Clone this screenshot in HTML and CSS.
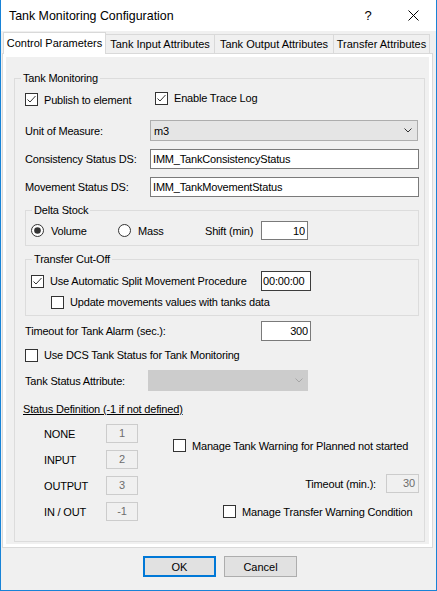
FILE: index.html
```html
<!DOCTYPE html>
<html lang="en">
<head>
    <meta charset="UTF-8">
    <title>Tank Monitoring Configuration</title>
    <link rel="stylesheet" href="styles.css">
</head>
<body>
    <div id="dialog">
        <div id="title_bar">
            <span id="title_text">Tank Monitoring Configuration</span>
            <span id="help_btn">?</span>
            <span id="close_btn">
                <svg width="11" height="11" viewBox="0 0 11 11"><path d="M0.5 0.5L10.5 10.5M10.5 0.5L0.5 10.5" stroke="#000" stroke-width="1"/></svg>
            </span>
        </div>

        <ul id="tabs">
            <li class="tab selected" style="width: 103px;">Control Parameters</li>
            <li class="tab" style="width: 109px;">Tank Input Attributes</li>
            <li class="tab" style="width: 119px;">Tank Output Attributes</li>
            <li class="tab" style="width: 96px;">Transfer Attributes</li>
        </ul>

        <div id="tab_pane">
            <div id="tab_page">
                <fieldset id="monitoring" class="group">
                    <legend>Tank Monitoring</legend>
                    <div class="group_body monitoring_body">

                        <div class="row row_checks">
                            <label class="check publish">
                                <svg class="box" width="13" height="13" viewBox="0 0 13 13"><rect x="0.5" y="0.5" width="12" height="12" fill="#fff" stroke="#333"/><path d="M2.5 6.5L5 9L10.5 3" fill="none" stroke="#333"/></svg>
                                Publish to element
                            </label>
                            <label class="check trace">
                                <svg class="box" width="13" height="13" viewBox="0 0 13 13"><rect x="0.5" y="0.5" width="12" height="12" fill="#fff" stroke="#333"/><path d="M2.5 6.5L5 9L10.5 3" fill="none" stroke="#333"/></svg>
                                Enable Trace Log
                            </label>
                        </div>

                        <div class="row row_combo">
                            <span class="field_label">Unit of Measure:</span>
                            <div class="combo">
                                <span class="combo_value">m3</span>
                                <svg width="8" height="5" viewBox="0 0 8 5"><path d="M0.5 0.5L4 4L7.5 0.5" fill="none" stroke="#333"/></svg>
                            </div>
                        </div>

                        <div class="row row_text">
                            <span class="field_label">Consistency Status DS:</span>
                            <input class="text_box wide" type="text" value="IMM_TankConsistencyStatus">
                        </div>

                        <div class="row row_text">
                            <span class="field_label">Movement Status DS:</span>
                            <input class="text_box wide" type="text" value="IMM_TankMovementStatus">
                        </div>

                        <fieldset id="delta_stock" class="group">
                            <legend>Delta Stock</legend>
                            <div class="group_body sub_body">
                                <div class="row row_radios">
                                    <label class="radio volume">
                                        <svg width="13" height="13" viewBox="0 0 13 13"><circle cx="6.5" cy="6.5" r="6" fill="#fff" stroke="#333"/><circle cx="6.5" cy="6.5" r="3.3" fill="#333"/></svg>
                                        Volume
                                    </label>
                                    <label class="radio mass">
                                        <svg width="13" height="13" viewBox="0 0 13 13"><circle cx="6.5" cy="6.5" r="6" fill="#fff" stroke="#333"/></svg>
                                        Mass
                                    </label>
                                    <span class="shift_label">Shift (min)</span>
                                    <input class="text_box num shift" type="text" value="10">
                                </div>
                            </div>
                        </fieldset>

                        <fieldset id="cut_off" class="group">
                            <legend>Transfer Cut-Off</legend>
                            <div class="group_body sub_body">
                                <div class="row row_split">
                                    <label class="check split">
                                        <svg class="box" width="13" height="13" viewBox="0 0 13 13"><rect x="0.5" y="0.5" width="12" height="12" fill="#fff" stroke="#333"/><path d="M2.5 6.5L5 9L10.5 3" fill="none" stroke="#333"/></svg>
                                        Use Automatic Split Movement Procedure
                                    </label>
                                    <input class="text_box time" type="text" value="00:00:00">
                                </div>
                                <div class="row row_update">
                                    <label class="check">
                                        <svg class="box" width="13" height="13" viewBox="0 0 13 13"><rect x="0.5" y="0.5" width="12" height="12" fill="#fff" stroke="#333"/></svg>
                                        Update movements values with tanks data
                                    </label>
                                </div>
                            </div>
                        </fieldset>

                        <div class="row row_timeout">
                            <span class="timeout_label">Timeout for Tank Alarm (sec.):</span>
                            <input class="text_box num" type="text" value="300">
                        </div>

                        <div class="row row_dcs">
                            <label class="check">
                                <svg class="box" width="13" height="13" viewBox="0 0 13 13"><rect x="0.5" y="0.5" width="12" height="12" fill="#fff" stroke="#333"/></svg>
                                Use DCS Tank Status for Tank Monitoring
                            </label>
                        </div>

                        <div class="row row_status_attr">
                            <span class="field_label">Tank Status Attribute:</span>
                            <div class="combo disabled">
                                <span class="combo_value"></span>
                                <svg width="8" height="5" viewBox="0 0 8 5"><path d="M0.5 0.5L4 4L7.5 0.5" fill="none" stroke="#a6a6a6"/></svg>
                            </div>
                        </div>

                        <p class="status_title">Status Definition (-1 if not defined)</p>

                        <div class="status_grid">
                            <span class="status_name">NONE</span>
                            <span class="status_value">1</span>
                            <span class="status_name">INPUT</span>
                            <span class="status_value">2</span>
                            <span class="status_name">OUTPUT</span>
                            <span class="status_value">3</span>
                            <span class="status_name">IN / OUT</span>
                            <span class="status_value">-1</span>

                            <label class="check planned">
                                <svg class="box" width="13" height="13" viewBox="0 0 13 13"><rect x="0.5" y="0.5" width="12" height="12" fill="#fff" stroke="#333"/></svg>
                                Manage Tank Warning for Planned not started
                            </label>
                            <div class="warn_timeout">
                                <span>Timeout (min.):</span>
                                <span class="status_value minutes">30</span>
                            </div>
                            <label class="check transfer_warn">
                                <svg class="box" width="13" height="13" viewBox="0 0 13 13"><rect x="0.5" y="0.5" width="12" height="12" fill="#fff" stroke="#333"/></svg>
                                Manage Transfer Warning Condition
                            </label>
                        </div>

                    </div>
                </fieldset>
            </div>
        </div>

        <div id="buttons">
            <button class="btn default">OK</button>
            <button class="btn">Cancel</button>
        </div>
    </div>
</body>
</html>
```

FILE: styles.css
```css
* {
    margin: 0;
    padding: 0;
    box-sizing: border-box;
}

html, body {
    background-color: #fff;
    font-family: "Liberation Sans", Arial, sans-serif;
    font-size: 11px;
    color: #000;
}

ul {
    list-style: none;
}

/* window frame */
#dialog {
    width: 437px;
    height: 591px;
    border: 1px solid #1883d7;
    border-top: none;
    background-color: #f0f0f0;
    display: flex;
    flex-direction: column;
}

#title_bar {
    height: 31px;
    flex-shrink: 0;
    background-color: #fff;
    display: flex;
    align-items: center;
    padding-left: 8px;
    font-size: 12.4px;
}

#title_text {
    flex: 1;
}

#help_btn {
    width: 46px;
    text-align: center;
    font-size: 13px;
}

#close_btn {
    width: 45px;
    height: 31px;
    display: flex;
    align-items: center;
    justify-content: center;
}

/* tab strip */
#tabs {
    display: flex;
    align-items: flex-end;
    height: 22px;
    flex-shrink: 0;
    margin: 1px 0 0 2px;
}

.tab {
    height: 20px;
    border: 1px solid #d9d9d9;
    border-left: none;
    background-color: #f0f0f0;
    text-align: center;
    line-height: 18px;
    font-size: 11px;
    white-space: nowrap;
}

.tab.selected {
    height: 22px;
    border-left: 1px solid #d9d9d9;
    border-bottom: none;
    background-color: #fff;
    line-height: 20px;
    position: relative;
    z-index: 1;
}

#tab_pane {
    margin: -1px 0 0 1px;
    width: 431px;
    height: 495px;
    flex-shrink: 0;
    border: 1px solid #d9d9d9;
    background-color: #fff;
    padding: 3px;
}

#tab_page {
    height: 100%;
    background-color: #f0f0f0;
    display: flex;
    flex-direction: column;
    padding: 15px 4px 2px 8px;
    letter-spacing: -0.18px;
}

/* group boxes */
.group {
    border: 1px solid #dcdcdc;
    min-width: 0;
    padding: 0;
}

.group legend {
    margin-left: 6px;
    padding: 0 2px;
    line-height: 13px;
}

#monitoring {
    flex: 1;
}

.monitoring_body {
    padding: 0 5px 0 10px;
}

.sub_body {
    padding: 0 5px 0 5px;
}

#delta_stock {
    margin-top: 7px;
    padding-bottom: 5px;
}

#cut_off {
    margin-top: 7px;
    padding-bottom: 6px;
}

.row {
    display: flex;
    align-items: center;
}

.row_checks {
    margin-top: 7px;
    height: 15px;
}

.row_combo {
    margin-top: 13px;
    height: 21px;
}

.row_text {
    margin-top: 8px;
    height: 20px;
}

.row_radios {
    margin-top: 4px;
    height: 19px;
}

.row_split {
    margin-top: 5px;
    height: 20px;
}

.row_update {
    margin-top: 4px;
    height: 14px;
    padding-left: 20px;
}

.row_timeout {
    margin-top: 5px;
    height: 20px;
}

.row_dcs {
    margin-top: 7px;
    height: 14px;
}

.row_status_attr {
    margin-top: 8px;
    height: 21px;
}

.field_label {
    width: 125px;
    flex-shrink: 0;
}

.row_status_attr .field_label {
    width: 123px;
}

/* checkboxes & radios */
.check, .radio {
    display: flex;
    align-items: center;
    white-space: nowrap;
}

.check svg {
    margin-right: 6px;
    flex-shrink: 0;
}

.radio svg {
    margin-right: 7px;
    flex-shrink: 0;
}

.publish {
    width: 130px;
}

.trace {
    margin-top: -3px;
}

.volume {
    width: 87px;
}

.mass {
    width: 87px;
}

.shift_label {
    width: 56px;
}

.split {
    width: 230px;
}

.timeout_label {
    width: 236px;
}

/* text boxes */
.text_box {
    height: 20px;
    border: 1px solid #7a7a7a;
    background-color: #fff;
    font-family: inherit;
    font-size: 11px;
    letter-spacing: -0.18px;
    color: #000;
    padding: 0 2px;
    outline: none;
}

.text_box.wide {
    flex: 1;
    min-width: 0;
}

.text_box.num {
    width: 50px;
    text-align: right;
}

.text_box.shift {
    width: 47px;
    height: 19px;
}

.text_box.time {
    width: 50px;
    border-color: #3c3c3c;
    padding: 0 1px;
}

.combo {
    flex: 1;
    height: 21px;
    margin-right: 1px;
    border: 1px solid #adadad;
    background-color: #e5e5e5;
    display: flex;
    align-items: center;
    padding: 0 5px 0 3px;
}

.combo_value {
    flex: 1;
}

.combo.disabled {
    flex: none;
    width: 160px;
    border-color: #cccccc;
    background-color: #cccccc;
    padding-right: 4px;
}

/* status definition */
.status_title {
    margin: 12px 0 0 -2px;
    line-height: 13px;
    text-decoration: underline;
}

.status_grid {
    margin-top: 8px;
    display: grid;
    grid-template-columns: 62px 32px 1fr;
    grid-template-rows: repeat(4, 19px);
    row-gap: 7px;
    padding-left: 19px;
}

.status_name {
    align-self: center;
}

.status_value {
    border: 1px solid #cccccc;
    color: #6d6d6d;
    text-align: center;
    line-height: 17px;
    height: 19px;
}

.status_grid > :nth-child(1), .status_grid > :nth-child(2) { grid-row: 1; }
.status_grid > :nth-child(3), .status_grid > :nth-child(4) { grid-row: 2; }
.status_grid > :nth-child(5), .status_grid > :nth-child(6) { grid-row: 3; }
.status_grid > :nth-child(7), .status_grid > :nth-child(8) { grid-row: 4; }

.planned {
    grid-column: 3;
    grid-row: 1 / 3;
    align-self: start;
    margin: 15px 0 0 35px;
}

.warn_timeout {
    grid-column: 3;
    grid-row: 3;
    display: flex;
    align-items: center;
    justify-content: flex-end;
    margin-top: -4px;
    gap: 10px;
}

.status_value.minutes {
    width: 33px;
    text-align: right;
    padding-right: 3px;
}

.transfer_warn {
    grid-column: 3;
    grid-row: 4;
    margin-left: 85px;
}

/* dialog buttons */
#buttons {
    display: flex;
    gap: 8px;
    margin-top: 8px;
    padding-left: 142px;
}

.btn {
    width: 73px;
    height: 21px;
    border: 1px solid #adadad;
    background-color: #e1e1e1;
    font-family: inherit;
    font-size: 11px;
    color: #000;
}

.btn.default {
    border: 2px solid #0078d7;
}
```
